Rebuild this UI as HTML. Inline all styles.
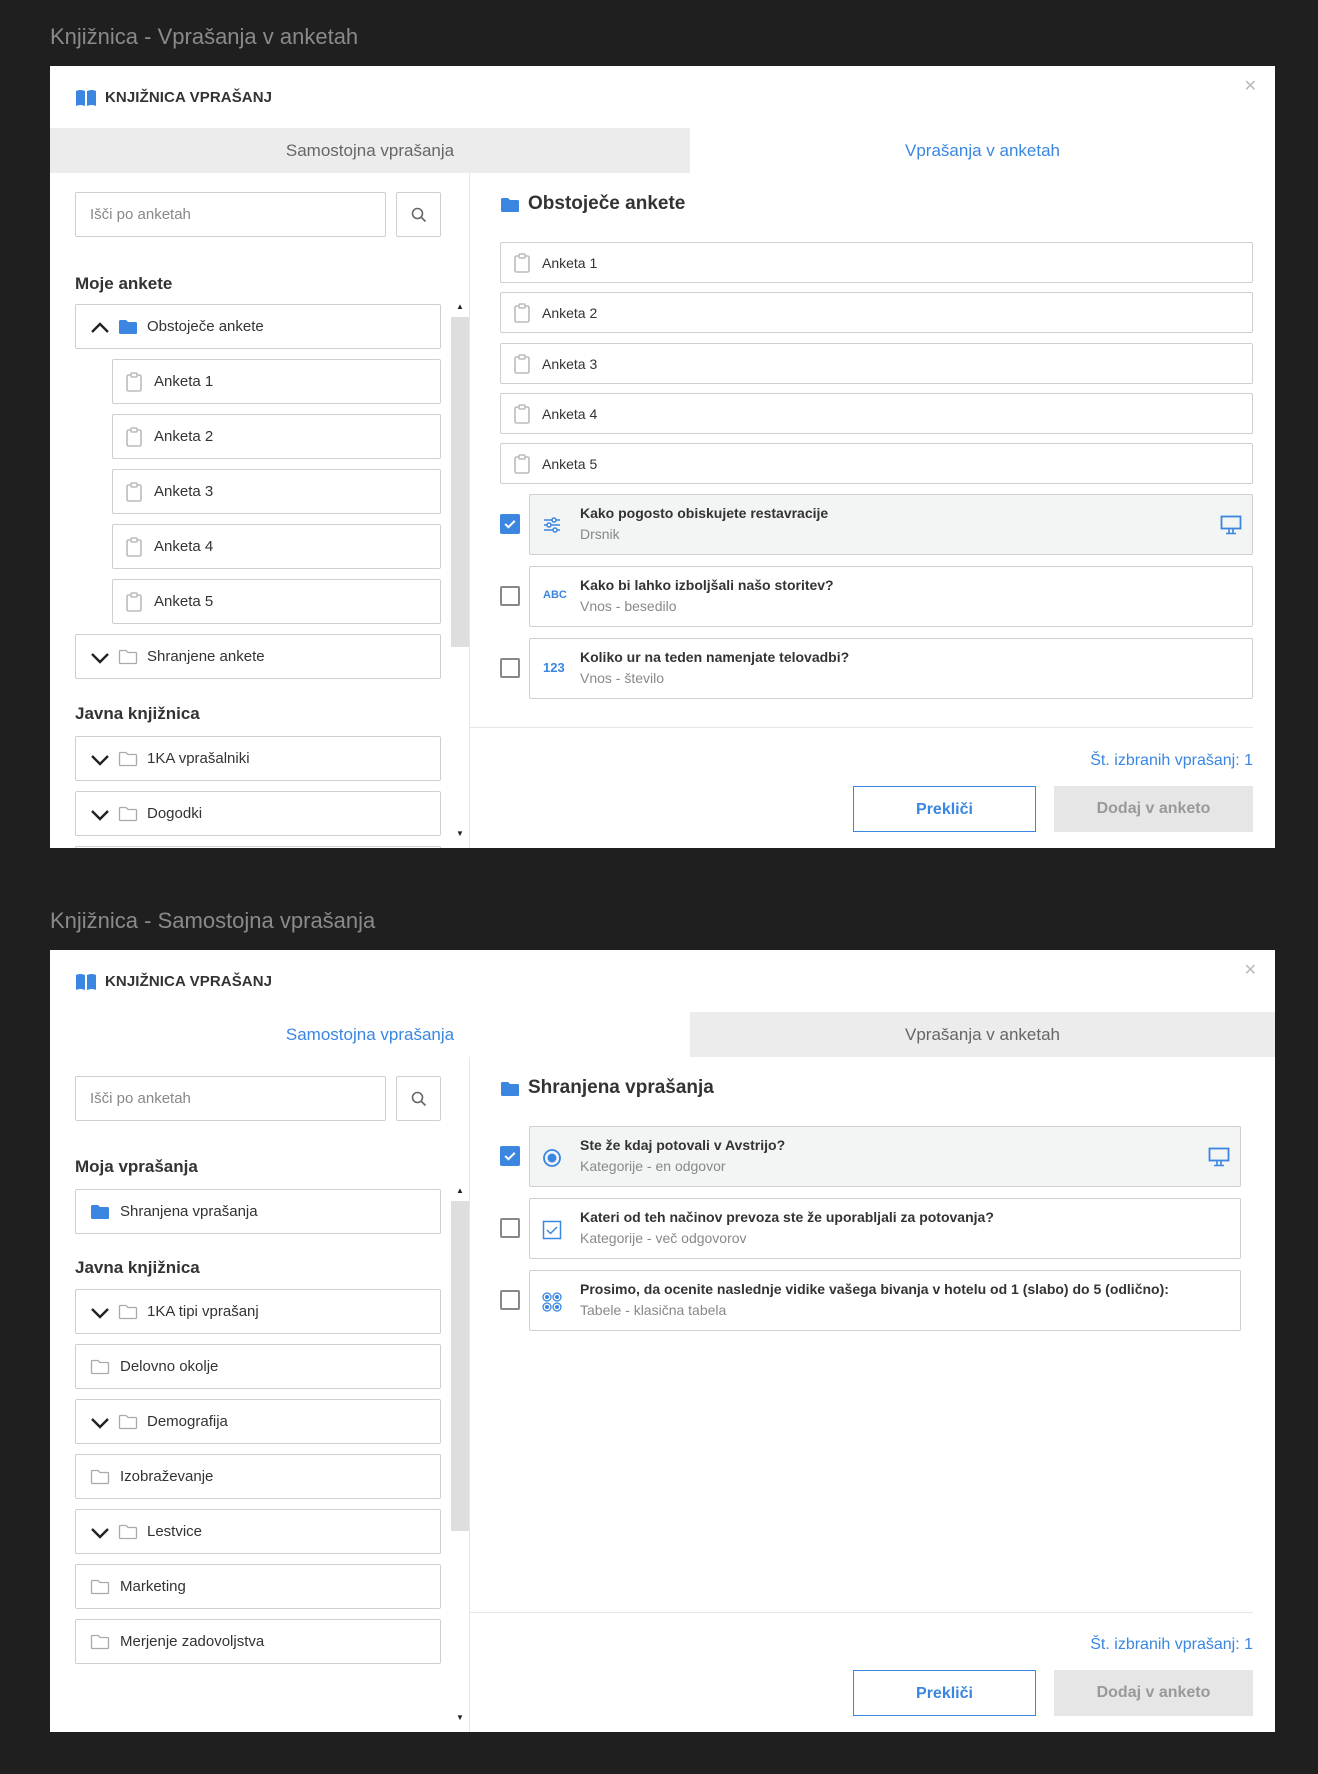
<!DOCTYPE html>
<html><head><meta charset="utf-8">
<style>
*{box-sizing:border-box;margin:0;padding:0}
body{width:1318px;height:1774px;background:#1f1f1f;font-family:"Liberation Sans",sans-serif;position:relative;overflow:hidden;color:#333}
.ttl{position:absolute;left:50px;color:#8a8a8a;font-size:22px}
.panel{position:absolute;left:50px;width:1225px;height:782px;background:#fff;overflow:hidden}
.a{position:absolute}
.hdr{left:55px;top:23px;font-size:15px;font-weight:bold;color:#333;letter-spacing:.1px}
.close{right:18px;top:10px;font-size:16px;color:#bbb}
.tab{top:62px;height:45px;width:640px;text-align:center;line-height:45px;font-size:17px}
.tab.off{background:#ececec;color:#666}
.tab.on{background:#fff;color:#3a86e0}
.vdiv{left:419px;top:107px;width:1px;height:700px;background:#e6e6e6}
.box{border:1px solid #cfcfcf;border-radius:2px;background:#fff}
.row{height:45px;font-size:15px;line-height:44px;color:#333}
.row span{position:absolute}
.h2{font-size:17px;font-weight:bold;color:#333}
.sb{left:401px;width:18px;height:330px;background:#dedede}
.arr{font-size:8px;color:#222;left:406px}
.ar{height:41px;font-size:14px;line-height:40px;left:450px;width:753px}
.q{height:61px;left:479px}
.q.sel{background:#f3f4f4}
.q .t{position:absolute;left:50px;top:10px;font-size:14px;font-weight:bold;color:#333}
.q .s{position:absolute;left:50px;top:31px;font-size:14px;color:#888}
.cb{left:450px;width:20px;height:20px;border:2px solid #888;border-radius:2px;background:#fff}
.cb.on{background:#3a86e0;border-color:#3a86e0}
.cnt{right:22px;font-size:16px;color:#3a86e0}
.btn{top:720px;height:46px;font-size:16px;font-weight:bold;text-align:center;line-height:46px}
</style></head><body>

<svg width="0" height="0" style="position:absolute">
<defs>
<symbol id="clip" viewBox="0 0 16 20"><rect x="1" y="3" width="14" height="16" rx="1.5" fill="none" stroke="#bbb" stroke-width="1.6"/><rect x="5" y="1" width="6" height="4" rx="1" fill="#fff" stroke="#bbb" stroke-width="1.5"/></symbol>
<symbol id="fold" viewBox="0 0 20 16"><path d="M1 2.5Q1 1 2.5 1H8l2 2h7.5Q19 3 19 4.5V14Q19 15 17.5 15H2.5Q1 15 1 13.5Z" fill="#3a86e0"/></symbol>
<symbol id="foldo" viewBox="0 0 20 16"><path d="M1.5 2.5Q1.5 1.5 2.5 1.5H8l2 2h7.5Q18.5 3.5 18.5 4.5V13.5Q18.5 14.5 17.5 14.5H2.5Q1.5 14.5 1.5 13.5Z" fill="none" stroke="#aaa" stroke-width="1.3"/></symbol>
<symbol id="down" viewBox="0 0 20 12"><path d="M2 2l8 8 8-8" fill="none" stroke="#222" stroke-width="2.4"/></symbol>
<symbol id="up" viewBox="0 0 20 12"><path d="M2 10l8-8 8 8" fill="none" stroke="#222" stroke-width="2.4"/></symbol>
<symbol id="mon" viewBox="0 0 22 20"><rect x="1.5" y="1.5" width="19" height="12" fill="none" stroke="#3a86e0" stroke-width="1.8"/><path d="M9 14v4M13 14v4M6 18.5h10" stroke="#3a86e0" stroke-width="1.6"/></symbol>
<symbol id="book" viewBox="0 0 22 18"><path d="M1 2Q5 0 10 2V17Q5 15 1 17Z M12 2Q17 0 21 2V17Q17 15 12 17Z" fill="#3a86e0"/></symbol>
<symbol id="srch" viewBox="0 0 16 16"><circle cx="6.5" cy="6.5" r="5" fill="none" stroke="#666" stroke-width="1.6"/><path d="M10.5 10.5l4 4" stroke="#666" stroke-width="1.6"/></symbol>
<symbol id="chk" viewBox="0 0 20 20"><path d="M4 10l4 4 8-8" fill="none" stroke="#fff" stroke-width="2.6"/></symbol>
</defs></svg>

<div class="ttl" style="top:24px">Knjižnica - Vprašanja v anketah</div>
<div class="panel" style="top:66px">
  <svg class="a" style="left:25px;top:23px" width="22" height="18"><use href="#book"/></svg>
  <div class="a hdr">KNJIŽNICA VPRAŠANJ</div>
  <div class="a close">✕</div>
  <div class="a tab off" style="left:0">Samostojna vprašanja</div>
  <div class="a tab on" style="left:640px;width:585px">Vprašanja v anketah</div>
  <div class="a vdiv"></div>
  <div class="a box" style="left:25px;top:126px;width:311px;height:45px;font-size:15px;color:#888;line-height:43px;padding-left:14px">Išči po anketah</div>
  <div class="a box" style="left:346px;top:126px;width:45px;height:45px"><svg class="a" style="left:14px;top:14px" width="16" height="16"><use href="#srch"/></svg></div>
  <div class="a h2" style="left:25px;top:208px">Moje ankete</div>
  <div class="a arr" style="top:236px">▲</div>
  <div class="a sb" style="top:251px"></div>
  <div class="a arr" style="top:763px">▼</div>

  <div class="a box row" style="left:25px;top:238px;width:366px"><svg class="a" style="left:14px;top:17px" width="20" height="12"><use href="#up"/></svg><svg class="a" style="left:42px;top:14px" width="20" height="16"><use href="#fold"/></svg><span style="left:71px">Obstoječe ankete</span></div>
  <div class="a box row" style="left:62px;top:293px;width:329px"><svg class="a" style="left:13px;top:12px" width="16" height="20"><use href="#clip"/></svg><span style="left:41px">Anketa 1</span></div>
  <div class="a box row" style="left:62px;top:348px;width:329px"><svg class="a" style="left:13px;top:12px" width="16" height="20"><use href="#clip"/></svg><span style="left:41px">Anketa 2</span></div>
  <div class="a box row" style="left:62px;top:403px;width:329px"><svg class="a" style="left:13px;top:12px" width="16" height="20"><use href="#clip"/></svg><span style="left:41px">Anketa 3</span></div>
  <div class="a box row" style="left:62px;top:458px;width:329px"><svg class="a" style="left:13px;top:12px" width="16" height="20"><use href="#clip"/></svg><span style="left:41px">Anketa 4</span></div>
  <div class="a box row" style="left:62px;top:513px;width:329px"><svg class="a" style="left:13px;top:12px" width="16" height="20"><use href="#clip"/></svg><span style="left:41px">Anketa 5</span></div>
  <div class="a box row" style="left:25px;top:568px;width:366px"><svg class="a" style="left:14px;top:17px" width="20" height="12"><use href="#down"/></svg><svg class="a" style="left:42px;top:14px" width="20" height="16"><use href="#foldo"/></svg><span style="left:71px">Shranjene ankete</span></div>
  <div class="a h2" style="left:25px;top:638px">Javna knjižnica</div>
  <div class="a box row" style="left:25px;top:670px;width:366px"><svg class="a" style="left:14px;top:17px" width="20" height="12"><use href="#down"/></svg><svg class="a" style="left:42px;top:14px" width="20" height="16"><use href="#foldo"/></svg><span style="left:71px">1KA vprašalniki</span></div>
  <div class="a box row" style="left:25px;top:725px;width:366px"><svg class="a" style="left:14px;top:17px" width="20" height="12"><use href="#down"/></svg><svg class="a" style="left:42px;top:14px" width="20" height="16"><use href="#foldo"/></svg><span style="left:71px">Dogodki</span></div>
  <div class="a box row" style="left:25px;top:780px;width:366px"></div>

  <svg class="a" style="left:450px;top:131px" width="20" height="16"><use href="#fold"/></svg>
  <div class="a" style="left:478px;top:127px;font-size:19px;font-weight:bold;color:#333">Obstoječe ankete</div>
  <div class="a box ar" style="top:176px"><svg class="a" style="left:13px;top:10px" width="16" height="20"><use href="#clip"/></svg><span class="a" style="left:41px">Anketa 1</span></div>
  <div class="a box ar" style="top:226px"><svg class="a" style="left:13px;top:10px" width="16" height="20"><use href="#clip"/></svg><span class="a" style="left:41px">Anketa 2</span></div>
  <div class="a box ar" style="top:277px"><svg class="a" style="left:13px;top:10px" width="16" height="20"><use href="#clip"/></svg><span class="a" style="left:41px">Anketa 3</span></div>
  <div class="a box ar" style="top:327px"><svg class="a" style="left:13px;top:10px" width="16" height="20"><use href="#clip"/></svg><span class="a" style="left:41px">Anketa 4</span></div>
  <div class="a box ar" style="top:377px"><svg class="a" style="left:13px;top:10px" width="16" height="20"><use href="#clip"/></svg><span class="a" style="left:41px">Anketa 5</span></div>

  <div class="a cb on" style="top:448px"><svg width="16" height="16"><use href="#chk"/></svg></div>
  <div class="a box q sel" style="top:428px;width:724px">
    <svg class="a" style="left:13px;top:21px" width="18" height="18" viewBox="0 0 18 18"><g stroke="#3a86e0" stroke-width="1.5" fill="none"><path d="M1 4h16M1 9h16M1 14h16"/><circle cx="11" cy="4" r="2" fill="#fff"/><circle cx="6" cy="9" r="2" fill="#fff"/><circle cx="12" cy="14" r="2" fill="#fff"/></g></svg>
    <div class="t">Kako pogosto obiskujete restavracije</div><div class="s">Drsnik</div>
    <svg class="a" style="left:690px;top:20px" width="22" height="20"><use href="#mon"/></svg>
  </div>
  <div class="a cb" style="top:520px"></div>
  <div class="a box q" style="top:500px;width:724px"><div class="a" style="left:13px;top:22px;font-size:11px;font-weight:bold;color:#3a86e0">ABC</div><div class="t">Kako bi lahko izboljšali našo storitev?</div><div class="s">Vnos - besedilo</div></div>
  <div class="a cb" style="top:592px"></div>
  <div class="a box q" style="top:572px;width:724px"><div class="a" style="left:13px;top:21px;font-size:13px;font-weight:bold;color:#3a86e0">123</div><div class="t">Koliko ur na teden namenjate telovadbi?</div><div class="s">Vnos - število</div></div>

  <div class="a" style="left:420px;top:661px;width:783px;height:1px;background:#e6e6e6"></div>
  <div class="a cnt" style="top:686px">Št. izbranih vprašanj: 1</div>
  <div class="a btn" style="left:803px;width:183px;border:1px solid #3a86e0;color:#3a86e0">Prekliči</div>
  <div class="a btn" style="left:1004px;width:199px;background:#e6e6e6;color:#999">Dodaj v anketo</div>
</div>

<div class="ttl" style="top:908px">Knjižnica - Samostojna vprašanja</div>
<div class="panel" style="top:950px">
  <svg class="a" style="left:25px;top:23px" width="22" height="18"><use href="#book"/></svg>
  <div class="a hdr">KNJIŽNICA VPRAŠANJ</div>
  <div class="a close">✕</div>
  <div class="a tab on" style="left:0">Samostojna vprašanja</div>
  <div class="a tab off" style="left:640px;width:585px">Vprašanja v anketah</div>
  <div class="a vdiv"></div>
  <div class="a box" style="left:25px;top:126px;width:311px;height:45px;font-size:15px;color:#888;line-height:43px;padding-left:14px">Išči po anketah</div>
  <div class="a box" style="left:346px;top:126px;width:45px;height:45px"><svg class="a" style="left:14px;top:14px" width="16" height="16"><use href="#srch"/></svg></div>
  <div class="a h2" style="left:25px;top:207px">Moja vprašanja</div>
  <div class="a arr" style="top:236px">▲</div>
  <div class="a sb" style="top:251px"></div>
  <div class="a arr" style="top:763px">▼</div>
  <div class="a box row" style="left:25px;top:239px;width:366px"><svg class="a" style="left:14px;top:14px" width="20" height="16"><use href="#fold"/></svg><span style="left:44px">Shranjena vprašanja</span></div>
  <div class="a h2" style="left:25px;top:308px">Javna knjižnica</div>
  <div class="a box row" style="left:25px;top:339px;width:366px"><svg class="a" style="left:14px;top:17px" width="20" height="12"><use href="#down"/></svg><svg class="a" style="left:42px;top:14px" width="20" height="16"><use href="#foldo"/></svg><span style="left:71px">1KA tipi vprašanj</span></div>
  <div class="a box row" style="left:25px;top:394px;width:366px"><svg class="a" style="left:14px;top:14px" width="20" height="16"><use href="#foldo"/></svg><span style="left:44px">Delovno okolje</span></div>
  <div class="a box row" style="left:25px;top:449px;width:366px"><svg class="a" style="left:14px;top:17px" width="20" height="12"><use href="#down"/></svg><svg class="a" style="left:42px;top:14px" width="20" height="16"><use href="#foldo"/></svg><span style="left:71px">Demografija</span></div>
  <div class="a box row" style="left:25px;top:504px;width:366px"><svg class="a" style="left:14px;top:14px" width="20" height="16"><use href="#foldo"/></svg><span style="left:44px">Izobraževanje</span></div>
  <div class="a box row" style="left:25px;top:559px;width:366px"><svg class="a" style="left:14px;top:17px" width="20" height="12"><use href="#down"/></svg><svg class="a" style="left:42px;top:14px" width="20" height="16"><use href="#foldo"/></svg><span style="left:71px">Lestvice</span></div>
  <div class="a box row" style="left:25px;top:614px;width:366px"><svg class="a" style="left:14px;top:14px" width="20" height="16"><use href="#foldo"/></svg><span style="left:44px">Marketing</span></div>
  <div class="a box row" style="left:25px;top:669px;width:366px"><svg class="a" style="left:14px;top:14px" width="20" height="16"><use href="#foldo"/></svg><span style="left:44px">Merjenje zadovoljstva</span></div>

  <svg class="a" style="left:450px;top:131px" width="20" height="16"><use href="#fold"/></svg>
  <div class="a" style="left:478px;top:127px;font-size:19px;font-weight:bold;color:#333">Shranjena vprašanja</div>

  <div class="a cb on" style="top:196px"><svg width="16" height="16"><use href="#chk"/></svg></div>
  <div class="a box q sel" style="top:176px;width:712px">
    <svg class="a" style="left:12px;top:21px" width="20" height="20" viewBox="0 0 20 20"><circle cx="10" cy="10" r="8" fill="none" stroke="#3a86e0" stroke-width="1.8"/><circle cx="10" cy="10" r="4.5" fill="#3a86e0"/></svg>
    <div class="t">Ste že kdaj potovali v Avstrijo?</div><div class="s">Kategorije - en odgovor</div>
    <svg class="a" style="left:678px;top:20px" width="22" height="20"><use href="#mon"/></svg>
  </div>
  <div class="a cb" style="top:268px"></div>
  <div class="a box q" style="top:248px;width:712px">
    <svg class="a" style="left:12px;top:21px" width="20" height="20" viewBox="0 0 20 20"><rect x="1.5" y="1.5" width="17" height="17" fill="none" stroke="#3a86e0" stroke-width="1.5"/><path d="M5 10l3.5 3.5L15 7" fill="none" stroke="#3a86e0" stroke-width="1.5"/></svg>
    <div class="t">Kateri od teh načinov prevoza ste že uporabljali za potovanja?</div><div class="s">Kategorije - več odgovorov</div>
  </div>
  <div class="a cb" style="top:340px"></div>
  <div class="a box q" style="top:320px;width:712px">
    <svg class="a" style="left:12px;top:21px" width="20" height="20" viewBox="0 0 20 20"><g fill="none" stroke="#3a86e0" stroke-width="1.3"><circle cx="5" cy="5" r="4"/><circle cx="15" cy="5" r="4"/><circle cx="5" cy="15" r="4"/><circle cx="15" cy="15" r="4"/></g><g fill="#3a86e0"><circle cx="5" cy="5" r="2"/><circle cx="15" cy="5" r="2"/><circle cx="5" cy="15" r="2"/><circle cx="15" cy="15" r="2"/></g></svg>
    <div class="t">Prosimo, da ocenite naslednje vidike vašega bivanja v hotelu od 1 (slabo) do 5 (odlično):</div><div class="s">Tabele - klasična tabela</div>
  </div>

  <div class="a" style="left:420px;top:662px;width:783px;height:1px;background:#e6e6e6"></div>
  <div class="a cnt" style="top:686px">Št. izbranih vprašanj: 1</div>
  <div class="a btn" style="left:803px;width:183px;border:1px solid #3a86e0;color:#3a86e0">Prekliči</div>
  <div class="a btn" style="left:1004px;width:199px;background:#e6e6e6;color:#999">Dodaj v anketo</div>
</div>
</body></html>
